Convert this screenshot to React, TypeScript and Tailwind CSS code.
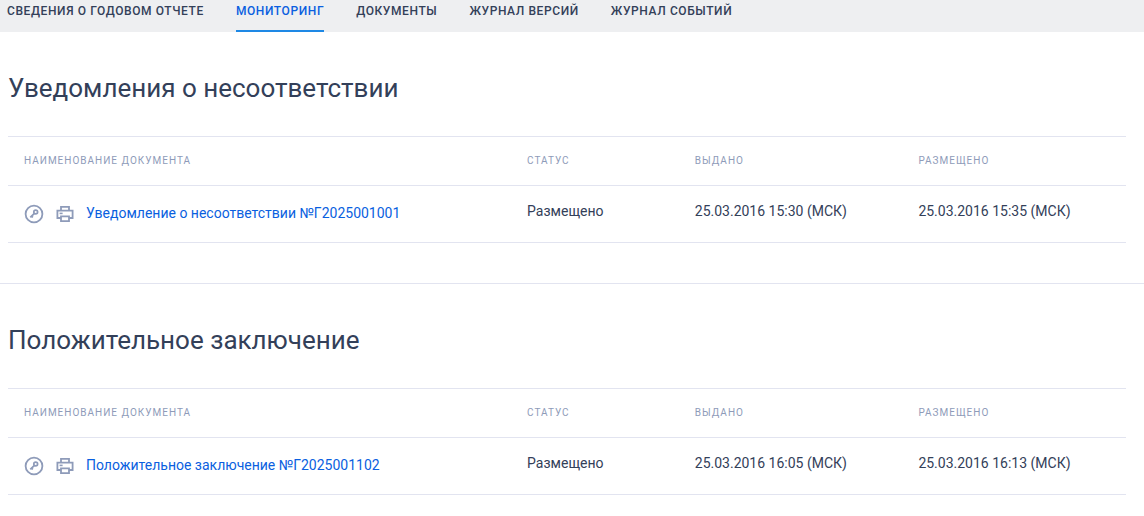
import React from "react";

type Doc = { title: string; name: string; issued: string; placed: string };

const tabs = ["Сведения о годовом отчете", "Мониторинг", "Документы", "Журнал версий", "Журнал событий"];

const sections: Doc[] = [
  {
    title: "Уведомления о несоответствии",
    name: "Уведомление о несоответствии №Г2025001001",
    issued: "25.03.2016 15:30 (МСК)",
    placed: "25.03.2016 15:35 (МСК)",
  },
  {
    title: "Положительное заключение",
    name: "Положительное заключение №Г2025001102",
    issued: "25.03.2016 16:05 (МСК)",
    placed: "25.03.2016 16:13 (МСК)",
  },
];

function KeyIcon() {
  return (
    <svg width="20" height="20" viewBox="0 0 20 20" fill="none" stroke="currentColor" aria-hidden="true">
      <circle cx="10" cy="10" r="8.4" strokeWidth="1.8" />
      <circle cx="11.7" cy="8" r="1.9" strokeWidth="1.7" />
      <path d="M10.4 9.3 6.3 13.4M7.6 12.3l1.3 1.1" strokeWidth="1.8" />
    </svg>
  );
}

function PrintIcon() {
  return (
    <svg width="20" height="20" viewBox="0 0 20 20" fill="none" stroke="currentColor" strokeWidth="1.8" aria-hidden="true">
      <path d="M6 6.5V2.9h8v3.6M6 14H2.4V6.6h15.2V14H14" />
      <path d="M6 12.4h8v4.8H6z" />
      <path d="M4.6 9.4h3" strokeWidth="1.6" />
    </svg>
  );
}

function Section({ title, name, issued, placed }: Doc) {
  return (
    <section className="border-b border-[#e2e4f0] pt-10 pr-[18px] pb-10 pl-2 last:border-b-0">
      <h2 className="text-[26px] leading-8">{title}</h2>
      <table className="mt-8 w-full table-fixed border-collapse text-left text-sm">
        <colgroup>
          <col className="w-[45%]" />
          <col className="w-[15%]" />
          <col className="w-[20%]" />
          <col className="w-[20%]" />
        </colgroup>
        <thead>
          <tr className="h-[49px] border-y border-[#e2e4f0] text-[10px] tracking-widest text-[#8e9bb9] uppercase">
            <th className="px-4 font-normal">Наименование документа</th>
            <th className="px-4 font-normal">Статус</th>
            <th className="px-4 font-normal">Выдано</th>
            <th className="px-4 font-normal">Размещено</th>
          </tr>
        </thead>
        <tbody>
          <tr className="h-[57px] border-b border-[#e2e4f0] align-top">
            <td className="px-4 pt-[18px]">
              <div className="flex items-center">
                <button type="button" aria-label="Подпись" className="mr-[11px] text-[#8e9bb9]"><KeyIcon /></button>
                <button type="button" aria-label="Печать" className="mr-[11px] text-[#8e9bb9]"><PrintIcon /></button>
                <a href="#" className="pb-0.5 leading-[18px] text-[#0a5fe0]">{name}</a>
              </div>
            </td>
            <td className="px-4 pt-[15px]">Размещено</td>
            <td className="px-4 pt-[15px]">{issued}</td>
            <td className="px-4 pt-[15px]">{placed}</td>
          </tr>
        </tbody>
      </table>
    </section>
  );
}

export default function App() {
  return (
    <div className="min-h-screen bg-white font-[Roboto,sans-serif] text-[#334059]">
      <nav className="flex h-8 gap-8 bg-[#eeeff1] pl-[7px] text-xs font-medium tracking-wider whitespace-nowrap uppercase">
        {tabs.map((tab, i) => (
          <a
            key={tab}
            href="#"
            aria-current={i === 1 ? "page" : undefined}
            className={i === 1 ? "border-b-2 border-[#1e88e5] pt-[3px] text-[#0a5fe0]" : "pt-[3px]"}
          >
            {tab}
          </a>
        ))}
      </nav>
      <main>
        {sections.map((s) => (
          <Section key={s.title} {...s} />
        ))}
      </main>
    </div>
  );
}
